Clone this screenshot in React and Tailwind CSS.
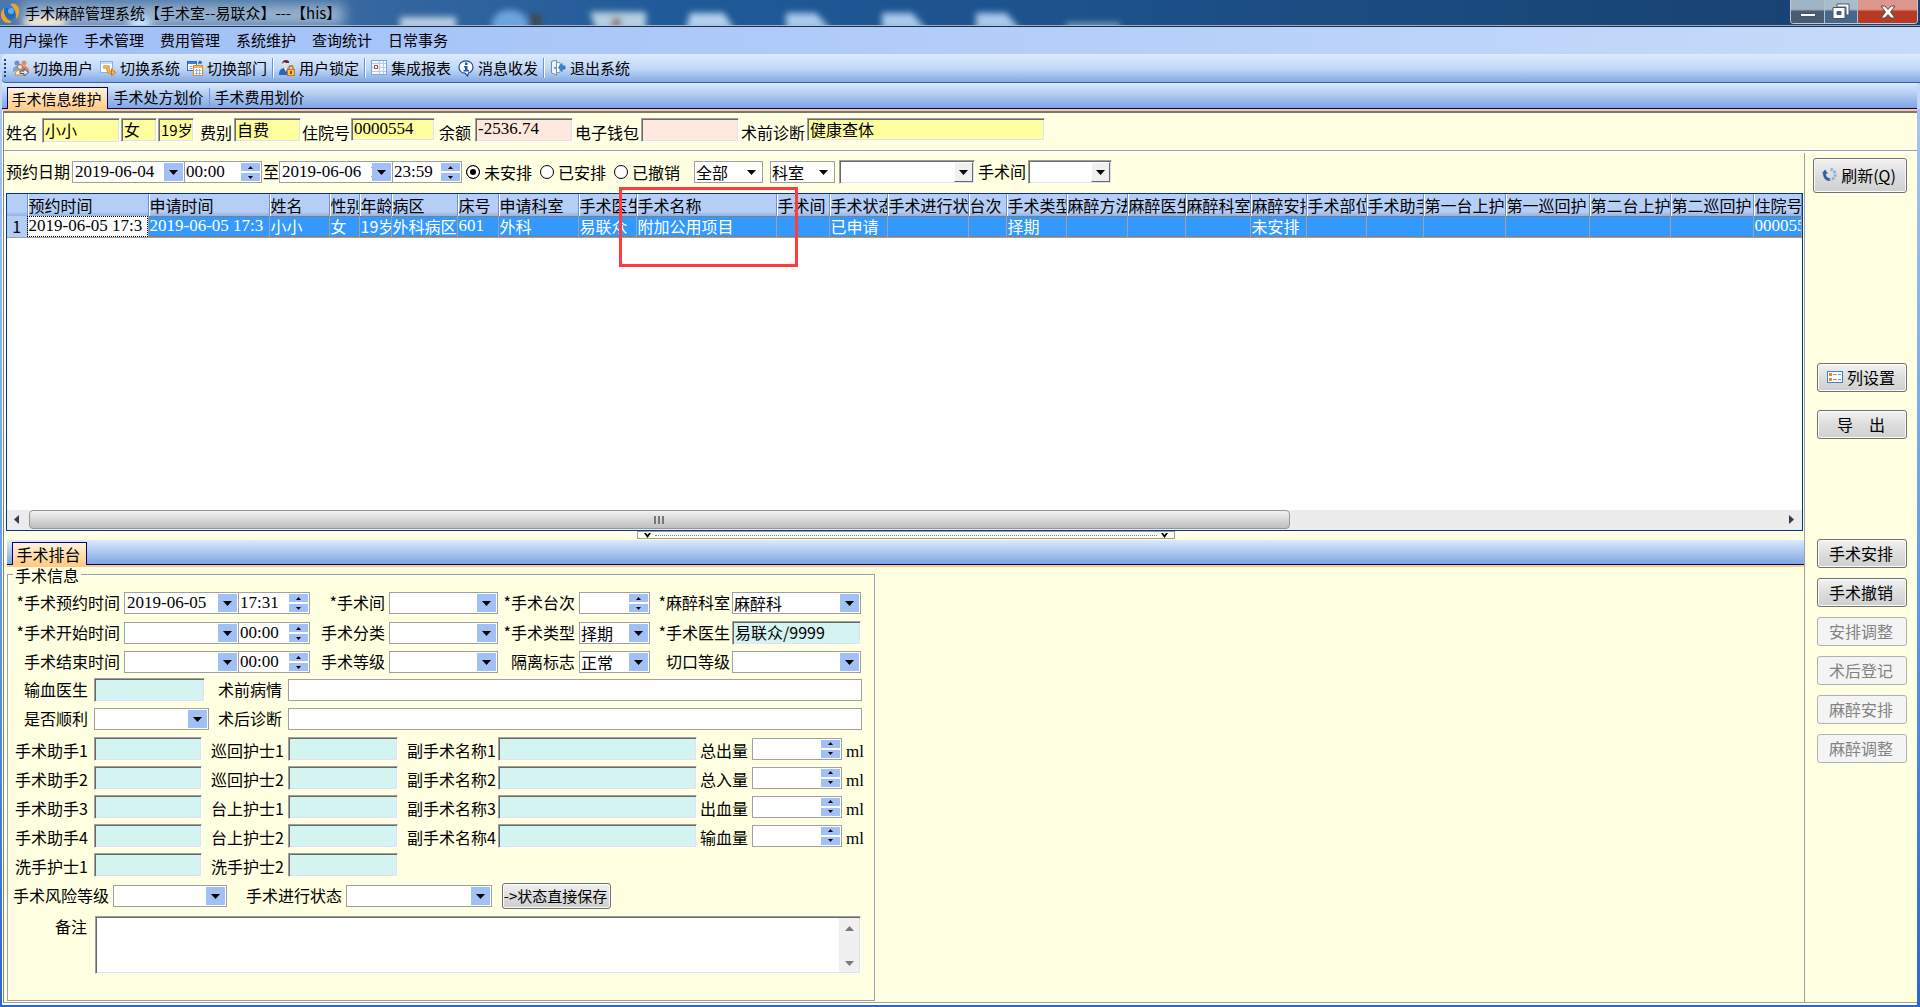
import React from "react";

const SONG = "font-['Noto_Sans_CJK_SC',sans-serif]";
const DIGITS = "font-['Liberation_Serif','Noto_Sans_CJK_SC',serif] text-[17px]";
const FLAT = "border border-[#a0a0a0] bg-white";
const SUNKEN =
  "border border-t-[#a0a0a0] border-l-[#a0a0a0] border-r-white border-b-white shadow-[inset_1px_1px_#696969,inset_-1px_-1px_#e3e3e3]";

/* ---------- icons ---------- */

function LogoIcon() {
  return (
    <svg width="20" height="22" viewBox="0 0 20 22" aria-hidden="true">
      <circle cx="10" cy="11" r="6.500" fill="#2468bd" />
      <path d="M3 6c2-4 6-4 8-3l4 5-5-2z" fill="#2f7fd0" />
      <circle cx="11" cy="9" r="3" fill="#63a9ea" />
      <path d="M10 2c5-2 10 2 9 8 0 3-1 5-3 7 0-4 0-7-2-10-1-2-3-4-4-5z" fill="#f0a22c" />
      <path d="M12 20c-5 3-11-1-11-7 0-3 1-5 3-7 0 4 0 6 2 9 1 2 4 4 6 5z" fill="#f0a22c" />
    </svg>
  );
}

function UsersIcon() {
  return (
    <svg width="16" height="16" viewBox="0 0 16 16" aria-hidden="true">
      <circle cx="4" cy="3" r="2.500" fill="#6c8fc9" />
      <circle cx="11" cy="3" r="2.500" fill="#d98a7c" />
      <path d="M0 12V8l3-2h3l1 4z" fill="#7ba4de" />
      <path d="M8 6h5l3 3v4H9z" fill="#dd8b60" />
      <circle cx="7" cy="7" r="2.500" fill="#fbe3b8" stroke="#9b7240" strokeWidth="1" />
      <path d="M2 15c0-3 2-5 5-5s4 2 4 5z" fill="#fff1d0" stroke="#c98a30" />
      <path d="M7 11h4V8.500l4.500 4L11 16v-2.500H7z" fill="#dfe9ef" stroke="#44566b" />
    </svg>
  );
}

function SwitchSystemIcon() {
  return (
    <svg width="16" height="16" viewBox="0 0 16 16" aria-hidden="true">
      <rect x="0.500" y="1.500" width="12" height="11" fill="#fff" stroke="#8bb0e6" />
      <rect x="1" y="2" width="11" height="2" fill="#c9dcf7" />
      <path d="M3 7h5v3c0 2 2 2.500 4 2.500" fill="none" stroke="#c9761c" strokeWidth="3" />
      <path d="M3 7h5v3c0 2 2 2.500 4 2.500" fill="none" stroke="#ffc04f" strokeWidth="1.500" />
      <path d="M11.500 9l4 3.500-4 3.300z" fill="#ffb53c" stroke="#c9761c" />
    </svg>
  );
}

function SwitchDeptIcon() {
  return (
    <svg width="16" height="16" viewBox="0 0 16 16" aria-hidden="true">
      <rect x="0.500" y="1.500" width="9" height="9" fill="#fff" stroke="#2f6bc0" />
      <rect x="1" y="2" width="8" height="2" fill="#3f7fd6" />
      <path d="M2.500 6.500h3M2.500 8.500h3" stroke="#7fa6dc" />
      <path d="M11 3h3v-2M14 3l-2-2" fill="none" stroke="#2f6bc0" strokeWidth="1.500" />
      <rect x="6.500" y="5.500" width="9" height="10" fill="#fff" stroke="#d58f28" />
      <rect x="7" y="6" width="8" height="2" fill="#f5b64b" />
      <path d="M8 10.500h6M8 13.500h6M9.500 9v6M12.500 9v6" stroke="#9bb8e2" />
    </svg>
  );
}

function LockUserIcon() {
  return (
    <svg width="16" height="16" viewBox="0 0 16 16" aria-hidden="true">
      <circle cx="6.500" cy="4" r="3" fill="#f4dccb" />
      <path d="M3.500 4C3 1 5 0 7 0s3.500 1 3 3c-2 0-4 0-5-1z" fill="#5b2a3c" />
      <path d="M0 15c0-5 2-7 6-7s5 2 5 7z" fill="#2b66b5" />
      <path d="M5 8h3l-1 4z" fill="#fff" />
      <path d="M10 10V8c0-3 4-3 4 0v2" fill="none" stroke="#b77a2a" strokeWidth="1.500" />
      <rect x="8.500" y="9.500" width="7" height="6" fill="#ffc04f" stroke="#b77a2a" />
      <rect x="11" y="11" width="2" height="3" fill="#8a4d12" />
    </svg>
  );
}

function ReportIcon() {
  return (
    <svg width="16" height="16" viewBox="0 0 16 16" aria-hidden="true">
      <rect x="0.500" y="0.500" width="15" height="14" fill="#f5f9ff" stroke="#7ba6e6" />
      <path d="M1 3.500h14M1 7.500h14M1 11.500h14M8.500 1v13M12.500 1v13" stroke="#b4cdf0" />
      <rect x="3.500" y="5.500" width="3" height="3" fill="#fff" stroke="#b5532a" />
    </svg>
  );
}

function InfoIcon() {
  return (
    <svg width="16" height="17" viewBox="0 0 16 17" aria-hidden="true">
      <path d="M8 0.800c4 0 7 2.700 7 6.200 0 3-2 5-4.500 6L9.500 16 7 13.200C3.500 13 1 10.500 1 7 1 3.500 4 .8 8 .8z" fill="#fff" stroke="#1d4a94" strokeWidth="1.200" />
      <rect x="7" y="2.500" width="2.500" height="2.500" fill="#1f57b0" />
      <path d="M6 6h3.500v4H11v1.500H5.500V10H7V7.500H6z" fill="#1f57b0" />
    </svg>
  );
}

function ExitIcon() {
  return (
    <svg width="16" height="16" viewBox="0 0 16 16" aria-hidden="true">
      <path d="M1.500 1.500L6.500 0v15l-5-2z" fill="#eaf3ff" stroke="#6f8fb0" />
      <path d="M7 2.500h3v10H7" fill="#fdfdfd" stroke="#8aa0b8" />
      <path d="M15 6h-3V3.500L8.500 7.500l3.500 4V9h3z" fill="#3f86e0" stroke="#1f5fb5" strokeWidth="0.800" />
      <circle cx="5" cy="8" r="0.900" fill="#44688f" />
    </svg>
  );
}

function RefreshIcon() {
  return (
    <svg width="15" height="15" viewBox="0 0 15 15" aria-hidden="true">
      <path d="M8.500 2.500A5 5 0 1 1 6 12" fill="none" stroke="#8fb4dc" strokeWidth="3" strokeDasharray="2.500 1" />
      <path d="M3 5C1.500 9 4 12.500 7.500 12.500" fill="none" stroke="#31649f" strokeWidth="3" />
      <path d="M0 6.500l3-4 3 4z" fill="#31649f" />
    </svg>
  );
}

function ColumnsIcon() {
  return (
    <svg width="16" height="12" viewBox="0 0 16 12" aria-hidden="true">
      <rect x="0.500" y="0.500" width="15" height="11" fill="#fff" stroke="#3f7fd6" />
      <rect x="2" y="2" width="3" height="3" fill="#e08a2b" />
      <rect x="2" y="7" width="3" height="3" fill="#e08a2b" />
      <path d="M6 3.500h4M11 3.500h3M6 8.500h4M11 8.500h3" stroke="#6f9bd8" />
    </svg>
  );
}

function Tri({ dir = "down" }) {
  return (
    <svg width="9" height="5" viewBox="0 0 9 5" aria-hidden="true">
      <path d={dir === "down" ? "M0 0h9L4.500 5z" : "M0 5h9L4.500 0z"} fill="currentColor" />
    </svg>
  );
}

function SmallTri({ dir }) {
  return (
    <svg width="5" height="3" viewBox="0 0 5 3" aria-hidden="true">
      <path d={dir === "down" ? "M0 0h5L2.500 3z" : "M0 3h5L2.500 0z"} fill="#000" />
    </svg>
  );
}

/* ---------- form controls ---------- */

function Label({ id, w, children, className = "" }) {
  return (
    <label htmlFor={id} className={`shrink-0 pb-0.5 whitespace-nowrap text-right leading-5 ${w} ${className}`}>
      {children}
    </label>
  );
}

function Sunken({ id, w, value = "", tone = "bg-[#d4f4f2]", h = "h-6", text = "text-base", label }) {
  return (
    <input
      id={id}
      aria-label={label}
      type="text"
      defaultValue={value}
      className={`min-w-0 shrink-0 pb-0.5 pl-0.5 leading-none outline-none ${h} ${w} ${tone} ${text} ${SUNKEN}`}
    />
  );
}

function DatePick({ id, w, value = "" }) {
  return (
    <span className={`flex h-[22px] shrink-0 p-px ${FLAT} ${w}`}>
      <input id={id} type="text" defaultValue={value} className={`min-w-0 flex-1 pl-px leading-none outline-none ${DIGITS}`} />
      <button type="button" aria-label="打开日历" className="grid w-[19px] shrink-0 place-items-center bg-[#a0c0f6]">
        <Tri />
      </button>
    </span>
  );
}

function Spin({ id, w, value = "", label, join = false }) {
  return (
    <span className={`flex h-[22px] shrink-0 p-px ${FLAT} ${w} ${join ? "-ml-px" : ""}`}>
      <input id={id} aria-label={label} type="text" defaultValue={value} className={`min-w-0 flex-1 leading-none outline-none ${DIGITS}`} />
      <span className="flex w-[19px] shrink-0 flex-col gap-0.5">
        <button type="button" aria-label="增加" className="grid flex-1 place-items-center bg-[#a0c0f6]"><SmallTri dir="up" /></button>
        <button type="button" aria-label="减少" className="grid flex-1 place-items-center bg-[#a0c0f6]"><SmallTri dir="down" /></button>
      </span>
    </span>
  );
}

function Select({ id, w, value = "", look = "blue", label }) {
  const box = look === "raised" ? `bg-white h-6 ${SUNKEN}` : `${FLAT} h-[22px]`;
  const arrow =
    look === "blue"
      ? "bg-[#a0c0f6]"
      : look === "raised"
        ? "bg-[#f0f0f0] border border-t-white border-l-white border-r-[#696969] border-b-[#696969]"
        : "bg-white";
  return (
    <span className={`relative block shrink-0 ${w}`}>
      <select id={id} aria-label={label} defaultValue={value} className={`block w-full appearance-none rounded-none pl-px text-base leading-5 outline-none ${box}`}>
        <option>{value}</option>
      </select>
      <span className={`pointer-events-none absolute inset-y-0.5 right-0.5 grid w-[19px] place-items-center ${arrow}`}>
        <Tri />
      </span>
    </span>
  );
}

function WinButton({ children, className = "", disabled = false }) {
  const tone = disabled
    ? "border-[#adb2b5] bg-[#f4f4f4] text-[#838383]"
    : "border-[#707070] bg-linear-to-b from-[#f2f2f2] from-0% via-[#dddddd] via-50% to-[#cfcfcf] shadow-[inset_0_0_0_1px_#fbfbfb]";
  return (
    <button type="button" disabled={disabled} className={`flex shrink-0 items-center justify-center rounded-[3px] border pr-0.5 pb-0.5 text-base leading-none whitespace-nowrap ${tone} ${className}`}>
      {children}
    </button>
  );
}

/* ---------- page parts ---------- */

function TitleBar() {
  return (
    <header className="relative flex h-[27px] shrink-0 items-center overflow-hidden border-b border-[#202c44] bg-linear-to-r from-[#4d76a8] via-[#1f5a99] via-35% to-[#17406e]">
      <svg className="absolute inset-0 h-full w-full" aria-hidden="true">
        <defs>
          <filter id="glass" x="-20%" y="-80%" width="140%" height="260%"><feGaussianBlur stdDeviation="3" /></filter>
          <filter id="glow" x="-20%" y="-80%" width="140%" height="260%"><feGaussianBlur stdDeviation="7" /></filter>
        </defs>
        <rect x="22" y="4" width="322" height="22" fill="#b3c6db" opacity="0.8" filter="url(#glow)" />
        <g filter="url(#glass)">
          <ellipse cx="45" cy="22" rx="22" ry="7" fill="#eee5d8" />
          <ellipse cx="140" cy="23" rx="12" ry="6" fill="#c8e4ff" />
          <rect x="400" y="17" width="56" height="12" fill="#b9cde3" />
          <ellipse cx="510" cy="24" rx="18" ry="14" fill="#6aa5e0" />
          <rect x="529" y="14" width="12" height="14" fill="#3d4854" />
          <path d="M590 12h56v18h-50z" fill="#b7cfe2" />
          <rect x="612" y="18" width="9" height="10" fill="#8a7468" />
          <path d="M690 13h34l10 16h-48z" fill="#b4d1ef" />
          <path d="M786 13h30l14 16h-44z" fill="#a9caee" />
          <path d="M882 13h30l14 16h-44z" fill="#a9caee" />
          <path d="M976 13h30l14 16h-44z" fill="#a9caee" />
          <rect x="1066" y="23" width="54" height="5" fill="#86a9cf" />
        </g>
        <rect y="25" width="100%" height="1" fill="#b6c8dd" opacity="0.8" />
      </svg>
      <div className="relative flex flex-1 items-center gap-[5px]">
        <LogoIcon />
        <h1 className="text-[15px] leading-5 text-black">手术麻醉管理系统【手术室--易联众】---【his】</h1>
      </div>
      <div className="relative mr-0.5 flex h-6 self-start overflow-hidden rounded-b border border-t-0 border-[#c0cad6]">
        <button type="button" aria-label="最小化" className="flex w-[34px] items-end justify-center border-r border-[#b5c0cc] bg-linear-to-b from-[#9fb4c4] from-40% to-[#4a5c70] to-50% pb-1.5">
          <span className="block h-1 w-4 border border-[#4a5766] bg-white" />
        </button>
        <button type="button" aria-label="还原" className="grid w-[33px] place-items-center border-r border-[#b5c0cc] bg-linear-to-b from-[#a9bccb] from-40% to-[#47688a] to-50%">
          <svg width="18" height="17" viewBox="0 0 18 17" aria-hidden="true">
            <path d="M5 1h12v11h-3V4H5z" fill="#fff" stroke="#4a5766" />
            <path d="M1 4.500h12v11H1zM5 8.500v3h4v-3z" fill="#fff" fillRule="evenodd" stroke="#4a5766" />
          </svg>
        </button>
        <button type="button" aria-label="关闭" className="grid w-[59px] place-items-center bg-linear-to-b from-[#dd968b] from-40% to-[#b93a24] to-50%">
          <svg width="16" height="14" viewBox="0 0 16 14" aria-hidden="true">
            <path d="M1 1h4l3 3.500L11 1h4l-4.500 6L15 13h-4L8 9.500 5 13H1l4.500-6z" fill="#fff" stroke="#544a55" />
          </svg>
        </button>
      </div>
    </header>
  );
}

const MENUS = ["用户操作", "手术管理", "费用管理", "系统维护", "查询统计", "日常事务"];

function MenuBar() {
  return (
    <nav className="flex h-[27px] shrink-0 items-center gap-4 bg-linear-to-r from-[#9fbff7] to-[#c6dbfa] pb-0.5 pl-2">
      {MENUS.map((m) => (
        <button key={m} type="button" className="text-[15px] leading-5">{m}</button>
      ))}
    </nav>
  );
}

function ToolItem({ icon, children }) {
  return (
    <button type="button" className="flex items-center gap-1 text-[15px] leading-5 whitespace-nowrap">{icon}{children}</button>
  );
}

function ToolSep() {
  return <span className="-mx-0.5 h-5 w-0.5 border-l border-[#6a93d4] bg-white" />;
}

function ToolBar() {
  return (
    <div role="toolbar" className="ml-0.5 flex h-[29px] shrink-0 items-center gap-[7px] rounded-l border-b border-[#3b619c] bg-linear-to-b from-[#dceafd] via-[#c3d9f7] via-50% to-[#83aae4] pl-0.5">
      <span className="h-[18px] w-0.5 bg-[repeating-linear-gradient(to_bottom,#27416f_0_2px,transparent_2px_4px)]" />
      <ToolItem icon={<UsersIcon />}>切换用户</ToolItem>
      <ToolItem icon={<SwitchSystemIcon />}>切换系统</ToolItem>
      <ToolItem icon={<SwitchDeptIcon />}>切换部门</ToolItem>
      <ToolSep />
      <ToolItem icon={<LockUserIcon />}>用户锁定</ToolItem>
      <ToolSep />
      <ToolItem icon={<ReportIcon />}>集成报表</ToolItem>
      <ToolItem icon={<InfoIcon />}>消息收发</ToolItem>
      <ToolSep />
      <ToolItem icon={<ExitIcon />}>退出系统</ToolItem>
    </div>
  );
}

const STRIP = "flex shrink-0 items-end border-b border-[#000080] bg-linear-to-b from-[#dceafd] to-[#7fa6e2]";
const ACTIVE_TAB = "-mb-px border border-b-0 border-[#000080] bg-linear-to-b from-[#fff3da] to-[#ffcb87] pr-0.5";

function MainTabs() {
  return (
    <div role="tablist" className={`${STRIP} mr-[3px] ml-0.5 h-[26px] pl-[5px] text-[15px]`}>
      <button type="button" role="tab" aria-selected="true" className={`${ACTIVE_TAB} h-[22px] w-[101px] leading-5`}>手术信息维护</button>
      <button type="button" role="tab" aria-selected="false" className="h-[22px] w-[101px] leading-5">手术处方划价</button>
      <span className="mb-0.5 h-[18px] w-px bg-[#6a93d4]" />
      <button type="button" role="tab" aria-selected="false" className="h-[22px] w-[99px] leading-5">手术费用划价</button>
    </div>
  );
}

function PatientBar() {
  const y = "bg-[#fffe9f]";
  const p = "bg-[#ffe9df]";
  return (
    <section className="flex h-[38px] shrink-0 items-start border-b border-[#a0a0a0] pt-[5px] pl-0.5">
      <Label id="p-name" w="w-9" className="pt-1 pr-1">姓名</Label>
      <Sunken id="p-name" w="w-[78px]" h="h-[25px]" value="小小" tone={y} />
      <span className="ml-px flex">
        <Sunken label="性别" w="w-9" value="女" tone={y} />
      </span>
      <span className="ml-px flex">
        <Sunken label="年龄" w="w-9" value="19岁" tone={y} text="text-[15px]" />
      </span>
      <Label id="p-fee" w="w-10" className="pt-1 pr-0.5">费别</Label>
      <Sunken id="p-fee" w="w-[67px]" value="自费" tone={y} />
      <Label id="p-no" w="w-[50px]" className="pt-1 pr-px">住院号</Label>
      <Sunken id="p-no" w="w-[84px]" h="h-[23px]" value="0000554" tone={y} text={DIGITS} />
      <Label id="p-bal" w="w-10" className="pt-1 pr-1">余额</Label>
      <Sunken id="p-bal" w="w-[98px]" value="-2536.74" tone={p} text={DIGITS} />
      <Label id="p-wallet" w="w-[68px]" className="pt-1 pr-0.5">电子钱包</Label>
      <Sunken id="p-wallet" w="w-[98px]" tone={p} />
      <Label id="p-diag" w="w-[68px]" className="pt-1 pr-0.5">术前诊断</Label>
      <Sunken id="p-diag" w="w-[238px]" h="h-[23px]" value="健康查体" tone={y} />
    </section>
  );
}

function Radio({ label, checked }) {
  return (
    <label className="flex items-center gap-1 whitespace-nowrap leading-5">
      <input
        type="radio"
        name="arranged"
        defaultChecked={checked}
        className="size-[14px] appearance-none rounded-full border border-black bg-white checked:bg-black checked:shadow-[inset_0_0_0_3px_white]"
      />
      {label}
    </label>
  );
}

function FilterBar() {
  return (
    <section className="flex h-10 shrink-0 items-center pb-0.5 pl-px">
      <Label id="f-from" w="w-[67px]" className="pr-0.5">预约日期</Label>
      <DatePick id="f-from" w="w-[113px]" value="2019-06-04  1" />
      <Spin label="开始时刻" w="w-[78px]" value="00:00" join />
      <Label id="f-to" w="w-[17px]">至</Label>
      <DatePick id="f-to" w="w-[114px]" value="2019-06-06  1" />
      <Spin label="结束时刻" w="w-[70px]" value="23:59" join />
      <span className="ml-1 flex gap-2">
        <Radio label="未安排" checked />
        <Radio label="已安排" />
        <Radio label="已撤销" />
      </span>
      <span className="ml-3.5 flex gap-[7px]">
        <Select label="范围" w="w-[69px]" value="全部" look="plain" />
        <Select label="科室类别" w="w-[65px]" value="科室" look="plain" />
      </span>
      <span className="ml-1 flex">
        <Select label="科室名称" w="w-[136px]" look="raised" />
      </span>
      <Label id="f-room" w="w-[53px]" className="pr-0.5">手术间</Label>
      <Select id="f-room" w="w-[84px]" look="raised" />
    </section>
  );
}

const COLUMNS = [
  [121, "预约时间", "2019-06-05 17:3"],
  [121, "申请时间", "2019-06-05 17:3"],
  [60, "姓名", "小小"],
  [30, "性别", "女"],
  [32, "年龄", "19岁"],
  [66, "病区", "外科病区"],
  [41, "床号", "601"],
  [80, "申请科室", "外科"],
  [58, "手术医生", "易联众"],
  [140, "手术名称", "附加公用项目"],
  [53, "手术间", ""],
  [58, "手术状态", "已申请"],
  [81, "手术进行状态", ""],
  [38, "台次", ""],
  [60, "手术类型", "择期"],
  [61, "麻醉方法", ""],
  [58, "麻醉医生", ""],
  [65, "麻醉科室", ""],
  [56, "麻醉安排", "未安排"],
  [60, "手术部位", ""],
  [57, "手术助手", ""],
  [82, "第一台上护", ""],
  [84, "第一巡回护", ""],
  [81, "第二台上护", ""],
  [83, "第二巡回护", ""],
  [null, "住院号", "000055"],
];

function SurgeryGrid() {
  return (
    <section className="relative mr-px ml-0.5 flex min-h-[180px] flex-1 flex-col border border-[#003399] bg-white">
      <div className="flex-1">
        <table className="w-full table-fixed border-collapse text-base">
          <colgroup>
            <col style={{ width: 20 }} />
            {COLUMNS.map(([w, name]) => (
              <col key={name} style={w ? { width: w } : undefined} />
            ))}
          </colgroup>
          <thead>
            <tr className="h-[22px] bg-linear-to-b from-[#b5cef5] from-80% to-[#93b1e0]">
              <th aria-label="序号" className="border-r border-[#6a93d4] p-0" />
              {COLUMNS.map(([, name]) => (
                <th key={name} className="h-[22px] overflow-hidden border-r border-[#6a93d4] p-0 pl-px text-left leading-[22px] font-normal whitespace-nowrap shadow-[inset_1px_0_#fff]">{name}</th>
              ))}
            </tr>
          </thead>
          <tbody>
            <tr className="h-[21px] border-b border-[#a0a0a0]">
              <td className="border-r border-[#6a93d4] bg-[#b5cef5] p-0 text-center leading-5">1</td>
              {COLUMNS.map(([, name, value], i) => (
                <td
                  key={name}
                  className={
                    i === 0
                      ? `h-[20px] overflow-hidden border-r border-[#a0a0a0] bg-white p-0 pl-px leading-5 whitespace-nowrap outline-1 -outline-offset-1 outline-dotted outline-black ${DIGITS}`
                      : `h-[20px] overflow-hidden border-r border-[#a0a0a0] bg-[#3399ff] bg-[repeating-linear-gradient(to_right,#cc6600_0_1px,transparent_1px_2px),repeating-linear-gradient(to_right,#cc6600_0_1px,transparent_1px_2px)] bg-[length:100%_1px] bg-[position:top,bottom] bg-no-repeat p-0 pl-px leading-5 whitespace-nowrap text-white ${/^\d+($|-)/.test(value) ? DIGITS : ""}`
                  }
                >
                  {value}
                </td>
              ))}
            </tr>
          </tbody>
        </table>
      </div>
      <div className="flex h-5 shrink-0 items-stretch bg-[#ececec] pb-px">
        <button type="button" aria-label="向左滚动" className="grid w-[22px] place-items-center pr-1">
          <svg width="5" height="9" viewBox="0 0 5 9" aria-hidden="true"><path d="M5 0v9L0 4.500z" fill="#333c4c" /></svg>
        </button>
        <div className="flex-1">
          <div className="flex h-[19px] w-[72%] items-center justify-center gap-0.5 rounded-sm border border-[#979797] bg-linear-to-b from-[#f2f2f2] via-[#d8d8da] via-50% to-[#bfbfc1]">
            <span className="h-2 w-0.5 bg-[#777]" />
            <span className="h-2 w-0.5 bg-[#777]" />
            <span className="h-2 w-0.5 bg-[#777]" />
          </div>
        </div>
        <button type="button" aria-label="向右滚动" className="grid w-[22px] place-items-center">
          <svg width="5" height="9" viewBox="0 0 5 9" aria-hidden="true"><path d="M0 0v9l5-4.500z" fill="#333c4c" /></svg>
        </button>
      </div>
      <div className="pointer-events-none absolute -top-[7px] left-[612px] h-20 w-[179px] border-3 border-[#ff3b3b]" />
    </section>
  );
}

function Chevron() {
  return (
    <svg width="7" height="5" viewBox="0 0 7 5" aria-hidden="true"><path d="M0 0h2l1.500 2L5 0h2L3.500 5z" fill="#000" /></svg>
  );
}

function Splitter() {
  return (
    <div className="flex h-[9px] shrink-0 justify-center pl-1">
      <div className="flex h-2 w-[30%] items-center gap-1 border border-[#a0a0a0] px-1.5">
        <Chevron />
        <span className="flex-1 border-t border-dotted border-[#3f8fe8]" />
        <Chevron />
      </div>
    </div>
  );
}

const STAFF_ROWS = [
  ["手术助手1", "巡回护士1", "副手术名称1", "总出量"],
  ["手术助手2", "巡回护士2", "副手术名称2", "总入量"],
  ["手术助手3", "台上护士1", "副手术名称3", "出血量"],
  ["手术助手4", "台上护士2", "副手术名称4", "输血量"],
  ["洗手护士1", "洗手护士2"],
];

function SurgeryForm() {
  return (
    <fieldset className="relative mt-[7px] mb-px ml-[3px] h-[427px] w-[868px] shrink-0 border border-[#a0a0a0] shadow-[1px_1px_#fff,inset_1px_1px_#fff]">
      <legend className="ml-[5px] h-0 px-0.5 leading-0">手术信息</legend>
      <div className="flex flex-col pt-[13px]">
        <div className="flex h-[30px] items-center">
          <Label id="s-book" w="w-[116px]" className="pr-1">*手术预约时间</Label>
          <DatePick id="s-book" w="w-[115px]" value="2019-06-05" />
          <Spin label="预约时刻" w="w-[72px]" value="17:31" join />
          <Label id="s-room" w="w-[79px]" className="pr-1">*手术间</Label>
          <Select id="s-room" w="w-[109px]" />
          <Label id="s-seq" w="w-[81px]" className="pr-1">*手术台次</Label>
          <Spin id="s-seq" w="w-[71px]" />
          <Label id="s-dept" w="w-[82px]" className="pr-0.5">*麻醉科室</Label>
          <Select id="s-dept" w="w-[129px]" value="麻醉科" />
        </div>
        <div className="flex h-[30px] items-center">
          <Label id="s-start" w="w-[116px]" className="pr-1">*手术开始时间</Label>
          <DatePick id="s-start" w="w-[115px]" />
          <Spin label="开始时刻" w="w-[72px]" value="00:00" join />
          <Label id="s-kind" w="w-[79px]" className="pr-1">手术分类</Label>
          <Select id="s-kind" w="w-[109px]" />
          <Label id="s-type" w="w-[81px]" className="pr-1">*手术类型</Label>
          <Select id="s-type" w="w-[71px]" value="择期" />
          <Label id="s-doc" w="w-[82px]" className="pr-0.5">*手术医生</Label>
          <Sunken id="s-doc" w="w-[129px]" value="易联众/9999" />
        </div>
        <div className="flex h-7 items-center">
          <Label id="s-end" w="w-[116px]" className="pr-1">手术结束时间</Label>
          <DatePick id="s-end" w="w-[115px]" />
          <Spin label="结束时刻" w="w-[72px]" value="00:00" join />
          <Label id="s-grade" w="w-[79px]" className="pr-1">手术等级</Label>
          <Select id="s-grade" w="w-[109px]" />
          <Label id="s-iso" w="w-[81px]" className="pr-1">隔离标志</Label>
          <Select id="s-iso" w="w-[71px]" value="正常" />
          <Label id="s-cut" w="w-[82px]" className="pr-0.5">切口等级</Label>
          <Select id="s-cut" w="w-[129px]" />
        </div>
        <div className="flex h-7 items-center">
          <Label id="s-blood" w="w-[86px]" className="pr-1.5">输血医生</Label>
          <Sunken id="s-blood" w="w-[111px]" />
          <Label id="s-pre" w="w-[83px]" className="pr-1.5">术前病情</Label>
          <input id="s-pre" type="text" className={`h-[22px] w-[574px] px-1 outline-none ${FLAT}`} />
        </div>
        <div className="flex h-[30px] items-center">
          <Label id="s-ok" w="w-[86px]" className="pr-1.5">是否顺利</Label>
          <Select id="s-ok" w="w-[115px]" />
          <Label id="s-post" w="w-[79px]" className="pr-1.5">术后诊断</Label>
          <input id="s-post" type="text" className={`h-[22px] w-[574px] px-1 outline-none ${FLAT}`} />
        </div>
        {STAFF_ROWS.map(([a, b, c, d]) => (
          <div key={a} className="flex h-[29px] items-center">
            <Label id={a} w="w-[86px]" className="pt-1 pr-1.5">{a}</Label>
            <Sunken id={a} w="w-[108px]" />
            <Label id={b} w="w-[86px]" className="pt-1 pr-1">{b}</Label>
            <Sunken id={b} w="w-[110px]" />
            {c && (
              <>
                <Label id={c} w="w-[100px]" className="pt-1 pr-0.5">{c}</Label>
                <Sunken id={c} w="w-[199px]" />
                <Label id={d} w="w-[55px]" className="pt-1 pr-1">{d}</Label>
                <Spin id={d} w="w-[90px]" />
                <span className={`pt-1.5 pl-1 leading-5 ${DIGITS}`}>ml</span>
              </>
            )}
          </div>
        ))}
        <div className="flex h-[34px] items-center">
          <Label id="s-risk" w="w-[105px]" className="pr-1">手术风险等级</Label>
          <Select id="s-risk" w="w-[114px]" />
          <Label id="s-state" w="w-[119px]" className="pr-1">手术进行状态</Label>
          <Select id="s-state" w="w-[146px]" />
          <WinButton className="ml-2.5 h-[26px] w-[109px] text-[15px]">-&gt;状态直接保存</WinButton>
        </div>
        <div className="flex items-start pt-[3px]">
          <Label id="s-note" w="w-[87px]" className="pr-2">备注</Label>
          <div className={`flex h-[58px] w-[766px] bg-white p-px ${SUNKEN}`}>
            <textarea id="s-note" className="min-w-0 flex-1 resize-none bg-transparent px-1 outline-none" />
            <div className="flex w-5 flex-col items-center justify-between bg-[#f0f0f0] pt-2 pb-1.5 text-[#7a7a7a]">
              <Tri dir="up" />
              <Tri />
            </div>
          </div>
        </div>
      </div>
    </fieldset>
  );
}

function SideBar() {
  return (
    <aside className="flex w-[113px] shrink-0 flex-col items-end border-l border-[#a0a0a0] pt-[5px] pr-2.5">
      <WinButton className="h-[35px] w-[94px] gap-1"><RefreshIcon /><span>刷新(<u>Q</u>)</span></WinButton>
      <WinButton className="mt-[170px] h-[29px] w-[90px] gap-1"><ColumnsIcon />列设置</WinButton>
      <WinButton className="mt-[18px] h-[29px] w-[90px] gap-4"><span>导</span><span>出</span></WinButton>
      <div className="mt-[100px] flex flex-col gap-2.5">
        <WinButton className="h-[29px] w-[90px]">手术安排</WinButton>
        <WinButton className="h-[29px] w-[90px]">手术撤销</WinButton>
        <WinButton disabled className="h-[29px] w-[90px]">安排调整</WinButton>
        <WinButton disabled className="h-[29px] w-[90px]">术后登记</WinButton>
        <WinButton disabled className="h-[29px] w-[90px]">麻醉安排</WinButton>
        <WinButton disabled className="h-[29px] w-[90px]">麻醉调整</WinButton>
      </div>
    </aside>
  );
}

export default function App() {
  return (
    <div className={`flex min-h-screen flex-col bg-linear-to-b from-[#a9c5f5] from-10% via-[#5b9be6] via-60% to-[#2a66cf] text-base text-black ${SONG}`}>
      <TitleBar />
      <MenuBar />
      <div className="flex flex-col bg-[#c3d8f8]">
        <ToolBar />
        <MainTabs />
      </div>
      <main className="mr-[3px] mb-0.5 ml-0.5 flex flex-1 flex-col border-t-2 border-[#ffcb87] bg-white">
        <div className="mb-0.5 ml-px flex flex-1 flex-col border-t-2 border-b border-l border-t-[#777] border-b-[#a0a0a0] border-l-[#808080] bg-[#ffffe1]">
          <PatientBar />
          <div className="flex flex-1 border-t-2 border-white">
            <div className="flex min-w-0 flex-1 flex-col">
              <FilterBar />
              <SurgeryGrid />
              <Splitter />
              <div role="tablist" className={`${STRIP} ml-[3px] h-[25px] pl-[5px]`}>
                <button type="button" role="tab" aria-selected="true" className={`${ACTIVE_TAB} h-[23px] w-[75px] leading-5`}>手术排台</button>
              </div>
              <div className="ml-[3px] h-0.5 shrink-0 bg-[#ffcb87]" />
              <SurgeryForm />
            </div>
            <SideBar />
          </div>
        </div>
      </main>
    </div>
  );
}
